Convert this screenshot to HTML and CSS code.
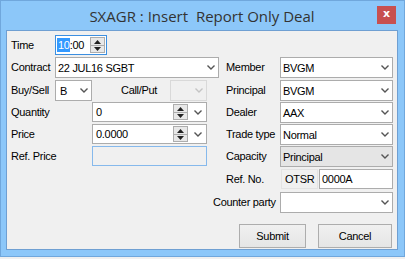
FILE: index.html
```html
<!DOCTYPE html>
<html lang="en">
<head>
  <meta charset="UTF-8" />
  <title>SXAGR : Insert Report Only Deal</title>
  <link rel="stylesheet" href="styles.css">
</head>
<body>

  <div class="window">
    <div class="titlebar">
      <span></span>
      <span class="title">SXAGR : Insert  Report Only Deal</span>
      <span class="close">x</span>
    </div>

    <div class="client">
      <div class="form">
        <!-- row 1 -->
        <label class="lbl c1 r1">Time</label>
        <div class="timebox r1">
          <span class="sel">10</span><span>:00</span>
          <span class="spin">
            <svg width="7" height="4" viewBox="0 0 7 4"><path d="M0 4 L3.5 0 L7 4 Z" fill="#222"/></svg>
            <svg width="7" height="4" viewBox="0 0 7 4"><path d="M0 0 L3.5 4 L7 0 Z" fill="#222"/></svg>
          </span>
        </div>

        <!-- row 2 -->
        <label class="lbl c1 r2">Contract</label>
        <div class="combo contract r2"><span>22 JUL16 SGBT</span><svg class="chev" width="8" height="5" viewBox="0 0 8 5"><path d="M0.5 0.5 L4 4 L7.5 0.5" stroke="#555" stroke-width="1.4" fill="none"/></svg></div>
        <label class="lbl rl r2">Member</label>
        <div class="combo rc r2"><span>BVGM</span><svg class="chev" width="8" height="5" viewBox="0 0 8 5"><path d="M0.5 0.5 L4 4 L7.5 0.5" stroke="#555" stroke-width="1.4" fill="none"/></svg></div>

        <!-- row 3 -->
        <label class="lbl c1 r3">Buy/Sell</label>
        <div class="combo buysell r3"><span>B</span><svg class="chev" width="8" height="5" viewBox="0 0 8 5"><path d="M0.5 0.5 L4 4 L7.5 0.5" stroke="#555" stroke-width="1.4" fill="none"/></svg></div>
        <label class="lbl callput r3">Call/Put</label>
        <div class="combo disabled cpbox r3"><span></span><svg class="chev" width="8" height="5" viewBox="0 0 8 5"><path d="M0.5 0.5 L4 4 L7.5 0.5" stroke="#c4c4c4" stroke-width="1.4" fill="none"/></svg></div>
        <label class="lbl rl r3">Principal</label>
        <div class="combo rc r3"><span>BVGM</span><svg class="chev" width="8" height="5" viewBox="0 0 8 5"><path d="M0.5 0.5 L4 4 L7.5 0.5" stroke="#555" stroke-width="1.4" fill="none"/></svg></div>

        <!-- row 4 -->
        <label class="lbl c1 r4">Quantity</label>
        <div class="numbox r4">
          <span class="val">0</span>
          <span class="spin">
            <svg width="7" height="4" viewBox="0 0 7 4"><path d="M0 4 L3.5 0 L7 4 Z" fill="#222"/></svg>
            <svg width="7" height="4" viewBox="0 0 7 4"><path d="M0 0 L3.5 4 L7 0 Z" fill="#222"/></svg>
          </span>
          <svg class="chev" width="8" height="5" viewBox="0 0 8 5"><path d="M0.5 0.5 L4 4 L7.5 0.5" stroke="#555" stroke-width="1.4" fill="none"/></svg>
        </div>
        <label class="lbl rl r4">Dealer</label>
        <div class="combo rc r4"><span>AAX</span><svg class="chev" width="8" height="5" viewBox="0 0 8 5"><path d="M0.5 0.5 L4 4 L7.5 0.5" stroke="#555" stroke-width="1.4" fill="none"/></svg></div>

        <!-- row 5 -->
        <label class="lbl c1 r5">Price</label>
        <div class="numbox r5">
          <span class="val">0.0000</span>
          <span class="spin">
            <svg width="7" height="4" viewBox="0 0 7 4"><path d="M0 4 L3.5 0 L7 4 Z" fill="#222"/></svg>
            <svg width="7" height="4" viewBox="0 0 7 4"><path d="M0 0 L3.5 4 L7 0 Z" fill="#222"/></svg>
          </span>
          <svg class="chev" width="8" height="5" viewBox="0 0 8 5"><path d="M0.5 0.5 L4 4 L7.5 0.5" stroke="#555" stroke-width="1.4" fill="none"/></svg>
        </div>
        <label class="lbl rl r5">Trade type</label>
        <div class="combo rc r5"><span>Normal</span><svg class="chev" width="8" height="5" viewBox="0 0 8 5"><path d="M0.5 0.5 L4 4 L7.5 0.5" stroke="#555" stroke-width="1.4" fill="none"/></svg></div>

        <!-- row 6 -->
        <label class="lbl c1 r6">Ref. Price</label>
        <div class="refprice r6"></div>
        <label class="lbl rl r6">Capacity</label>
        <div class="combo flat rc r6"><span>Principal</span><svg class="chev" width="8" height="5" viewBox="0 0 8 5"><path d="M0.5 0.5 L4 4 L7.5 0.5" stroke="#555" stroke-width="1.4" fill="none"/></svg></div>

        <!-- row 7 -->
        <label class="lbl rl r7">Ref. No.</label>
        <div class="refno rc r7">
          <span class="prefix">OTSR</span>
          <span class="textbox">0000A</span>
        </div>

        <!-- row 8 -->
        <label class="lbl counter r8">Counter party</label>
        <div class="combo rc r8"><span></span><svg class="chev" width="8" height="5" viewBox="0 0 8 5"><path d="M0.5 0.5 L4 4 L7.5 0.5" stroke="#555" stroke-width="1.4" fill="none"/></svg></div>

        <!-- buttons -->
        <div class="buttons">
          <button class="btn submit">Submit</button>
          <button class="btn cancel">Cancel</button>
        </div>
      </div>
    </div>
  </div>

</body>
</html>
```

FILE: styles.css
```css
* { box-sizing: border-box; }
body {
  margin: 0;
  background: #f0f0f0;
  font-family: "Liberation Sans", Arial, sans-serif;
  font-size: 11px;
  letter-spacing: -0.3px;
  color: #000;
}

/* window frame */
.window {
  width: 405px;
  height: 257px;
  border: 1px solid #70a7dc;
  background: #8cc7f9;
  padding: 0 6px 6px 5px;
  display: flex;
  flex-direction: column;
}

.titlebar {
  height: 29px;
  display: grid;
  grid-template-columns: 1fr auto 1fr;
  align-items: center;
}
.title {
  font-family: "Open Sans", sans-serif;
  font-size: 15px;
  letter-spacing: 0;
  color: #333;
  white-space: pre;
  padding-top: 1px;
}
.close {
  justify-self: end;
  align-self: start;
  margin: 5px 2px 0 0;
  width: 19px;
  height: 18px;
  background: #c75050;
  color: #fff;
  font-family: "DejaVu Sans", sans-serif;
  font-weight: bold;
  font-size: 11px;
  letter-spacing: 0;
  line-height: 16px;
  text-align: center;
}

.client {
  flex: 1;
  background: #f0f0f0;
  border: 1px solid #6f9fd2;
}

/* form grid */
.form {
  padding: 4px 0 0 4px;
  display: grid;
  grid-template-columns: 44px 37px 78px 37px 12px 61px 113px;
  grid-template-rows: 22px 23px 22px 22px 22px 23px 23px 32px 24px;
}
.r1 { grid-row: 1; }
.r2 { grid-row: 2; }
.r3 { grid-row: 3; }
.r4 { grid-row: 4; }
.r5 { grid-row: 5; }
.r6 { grid-row: 6; }
.r7 { grid-row: 7; }
.r8 { grid-row: 8; }

.lbl {
  height: 20px;
  display: flex;
  align-items: center;
  white-space: nowrap;
}
.c1 { grid-column: 1 / 3; }
.rl { grid-column: 6; padding-left: 7px; }
.rc { grid-column: 7; }
.callput { grid-column: 3; padding-left: 29px; }
.counter { grid-column: 5 / 7; padding-left: 6px; }

/* controls */
.combo {
  height: 21px;
  border: 1px solid #acacac;
  background: #fff;
  display: flex;
  align-items: center;
  justify-content: space-between;
  padding: 0 3px 0 2px;
}
.combo.contract { grid-column: 2 / 6; }
.combo.buysell { grid-column: 2; padding-left: 4px; }
.combo.cpbox { grid-column: 4; }
.combo.disabled {
  background: #f0f0f0;
  border-color: #d9d9d9;
}
.combo.flat {
  background: #e5e5e5;
  border-color: #acacac;
}
.chev { flex: none; }

.timebox {
  grid-column: 2 / 4;
  width: 52px;
  height: 20px;
  border: 1px solid #3c8fe0;
  background: #fff;
  display: flex;
  align-items: center;
  padding-left: 1px;
}
.timebox .sel {
  background: #3399ff;
  color: #fff;
  padding: 1px 0 1px 1px;
}
.timebox .spin { margin-left: auto; margin-right: 1px; }

.spin {
  width: 15px;
  height: 16px;
  border: 1px solid #adadad;
  background: #e8e8e8;
  display: flex;
  flex-direction: column;
  align-items: center;
  justify-content: space-around;
  background-image: linear-gradient(#adadad, #adadad);
  background-size: 100% 1px;
  background-position: 0 50%;
  background-repeat: no-repeat;
}

.numbox {
  grid-column: 3 / 5;
  height: 20px;
  border: 1px solid #acacac;
  background: #fff;
  display: flex;
  align-items: center;
  padding: 0 4px 0 3px;
}
.numbox .val { flex: 1; }
.numbox .spin { margin-right: 6px; }

.refprice {
  grid-column: 3 / 5;
  height: 20px;
  border: 1px solid #86b9ec;
  background: #f0f0f0;
}

.refno {
  display: flex;
  gap: 1px;
  height: 20px;
}
.refno .prefix {
  width: 37px;
  margin-left: 1px;
  border: 1px solid #e3e3e3;
  background: #f0f0f0;
  padding: 0 3px;
  display: flex;
  align-items: center;
}
.refno .textbox {
  flex: 1;
  border: 1px solid #acacac;
  background: #fff;
  padding: 0 2px;
  display: flex;
  align-items: center;
}

/* buttons */
.buttons {
  grid-row: 9;
  grid-column: 1 / -1;
  display: flex;
  justify-content: flex-end;
  gap: 12px;
  padding-right: 1px;
}
.btn {
  height: 24px;
  border: 1px solid #adadad;
  background: linear-gradient(#f0f0f0, #e5e5e5);
  font-family: "Liberation Sans", Arial, sans-serif;
  font-size: 11px;
  letter-spacing: -0.3px;
  color: #000;
  padding: 0;
}
.submit { width: 67px; }
.cancel { width: 74px; }
```
